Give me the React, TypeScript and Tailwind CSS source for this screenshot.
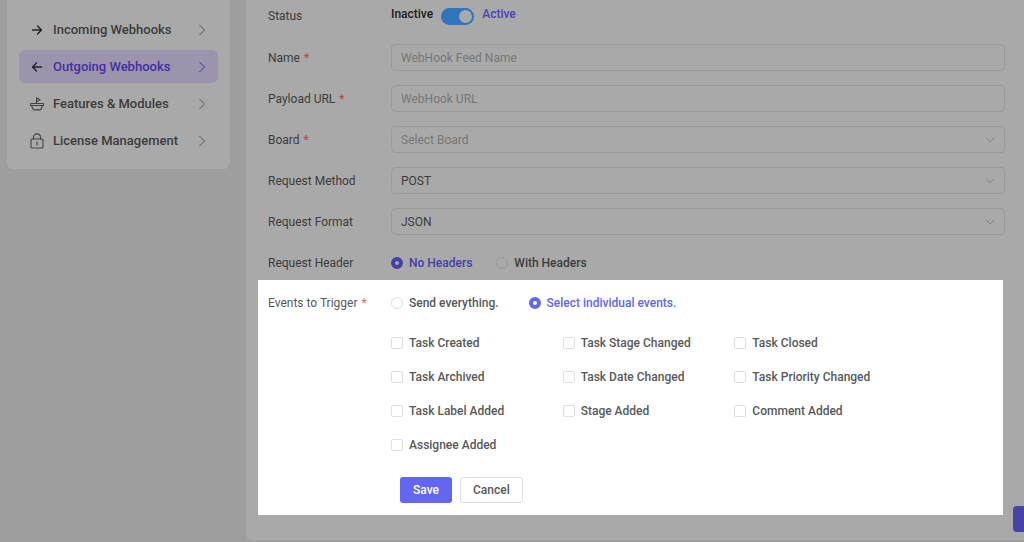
import React, { useState } from 'react';

interface NavItem {
  label: string;
  icon: React.ReactNode;
}

const ArrowIcon: React.FC<{ left?: boolean }> = ({ left }) => (
  <svg viewBox="0 0 14 14" className="h-[14px] w-[14px]" fill="none" stroke="#222" strokeWidth="1.4" strokeLinecap="round" strokeLinejoin="round">
    {left ? <path d="M11.5 7H2.5M6.5 3L2.5 7l4 4" /> : <path d="M2.5 7h9M7.5 3l4 4-4 4" />}
  </svg>
);

const BoatIcon = () => (
  <svg viewBox="0 0 14 14" className="h-[14px] w-[14px]" fill="none" stroke="#444" strokeWidth="1.1" strokeLinejoin="round" strokeLinecap="round">
    <path d="M6.5 6.5V.8l3.6 2-3.6 2" />
    <path d="M.6 6.5h12.8v2H.6z" />
    <path d="M1.7 8.5c.2 2.4.9 3.7 2.3 4.4h6c1.4-.7 2.1-2 2.3-4.4" />
  </svg>
);

const LockIcon = () => (
  <svg viewBox="0 0 14 16" className="h-4 w-[14px]" fill="none" stroke="#444" strokeWidth="1.1" strokeLinecap="round">
    <rect x="1" y="6" width="12" height="9" rx="1" />
    <path d="M3.5 6V4.4a3.5 3.5 0 0 1 7 0V6M7 9v3" />
  </svg>
);

const navItems: NavItem[] = [
  { label: 'Incoming Webhooks', icon: <ArrowIcon /> },
  { label: 'Outgoing Webhooks', icon: <ArrowIcon left /> },
  { label: 'Features & Modules', icon: <BoatIcon /> },
  { label: 'License Management', icon: <LockIcon /> },
];

const events = [
  'Task Created',
  'Task Stage Changed',
  'Task Closed',
  'Task Archived',
  'Task Date Changed',
  'Task Priority Changed',
  'Task Label Added',
  'Stage Added',
  'Comment Added',
  'Assignee Added',
];

const labelClass = 'w-[123px] shrink-0 text-[#3c3c3c]';
const fieldClass =
  'h-[27px] w-full appearance-none rounded border border-[#9a9a9a] bg-transparent px-[9px] outline-none placeholder:text-[#777]';

const Required = () => <span className="ml-1 text-[#b04444]">*</span>;

const TextRow: React.FC<{ id: string; label: string; placeholder: string }> = ({ id, label, placeholder }) => (
  <div className="flex h-[41px] items-center">
    <label htmlFor={id} className={labelClass}>
      {label}
      <Required />
    </label>
    <input id={id} type="text" placeholder={placeholder} className={fieldClass} />
  </div>
);

interface SelectRowProps {
  id: string;
  label: string;
  options: string[];
  required?: boolean;
}

const SelectRow: React.FC<SelectRowProps> = ({ id, label, options, required }) => (
  <div className="flex h-[41px] items-center">
    <label htmlFor={id} className={labelClass}>
      {label}
      {required && <Required />}
    </label>
    <div className="relative flex-1">
      <select id={id} className={`${fieldClass} ${required ? 'text-[#777]' : 'text-[#3c3c3c]'}`}>
        {options.map((o) => (
          <option key={o}>{o}</option>
        ))}
      </select>
      <svg viewBox="0 0 10 6" className="pointer-events-none absolute top-[11px] right-[10px] h-[6px] w-[10px]" fill="none" stroke="#808080" strokeWidth="1">
        <path d="M1 .8l4 4 4-4" />
      </svg>
    </div>
  </div>
);

const App: React.FC = () => {
  const [active, setActive] = useState(true);
  const [headers, setHeaders] = useState('none');
  const [trigger, setTrigger] = useState('individual');

  return (
    <div className="flex min-h-screen items-start overflow-hidden bg-[#9e9e9e] font-['Roboto',sans-serif] text-[12px] leading-4">
      <aside className="mr-4 ml-[7px] w-[223px] shrink-0 rounded-b-md bg-[#a9a9a9] px-3 pt-[13px] pb-3">
        <nav className="flex flex-col gap-1">
          {navItems.map((item) => {
            const current = item.label === 'Outgoing Webhooks';
            return (
              <a
                key={item.label}
                href="#"
                className={`flex h-[33px] items-center rounded-md pr-3 pl-[11px] text-[13px] font-medium ${
                  current ? 'bg-[#9c93ad] text-[#4330a3]' : 'text-[#3c3c3c]'
                }`}
              >
                {item.icon}
                <span className="ml-[9px] flex-1">{item.label}</span>
                <svg viewBox="0 0 8 12" className="h-3 w-2" fill="none" stroke={current ? '#4330a3' : '#555'} strokeWidth="1">
                  <path d="M1.5 1l5 5-5 5" />
                </svg>
              </a>
            );
          })}
        </nav>
      </aside>

      <main className="relative min-w-0 flex-1 rounded-bl-md bg-[#a9a9a9] pb-[25px]">
        <form onSubmit={(e) => e.preventDefault()}>
          <div className="pr-[19px] pl-[22px]">
            <div className="flex h-[37px] items-start pt-[6px]">
              <span className={`${labelClass} pt-[2px]`}>Status</span>
              <label htmlFor="status" className="font-medium text-[#1c1c1c]">Inactive</label>
              <input
                id="status"
                type="checkbox"
                role="switch"
                checked={active}
                onChange={(e) => setActive(e.target.checked)}
                className="mx-2 mt-[2px] flex h-[17px] w-[33px] appearance-none rounded-full bg-[#777] p-[2px] before:h-[13px] before:w-[13px] before:rounded-full before:bg-[#a9a9a9] checked:justify-end checked:bg-[#2f74bd]"
              />
              <label htmlFor="status" className="font-medium text-[#4a43b5]">Active</label>
            </div>
            <TextRow id="name" label="Name" placeholder="WebHook Feed Name" />
            <TextRow id="url" label="Payload URL" placeholder="WebHook URL" />
            <SelectRow id="board" label="Board" options={['Select Board']} required />
            <SelectRow id="method" label="Request Method" options={['POST', 'GET']} />
            <SelectRow id="format" label="Request Format" options={['JSON', 'XML']} />
            <div className="flex h-[38px] items-center pt-[3px] font-medium">
              <span className={`${labelClass} font-normal`}>Request Header</span>
              {[
                { value: 'none', label: 'No Headers' },
                { value: 'with', label: 'With Headers' },
              ].map((o) => (
                <label key={o.value} className="mr-6 flex items-center gap-[6px] text-[#3c3c3c] has-checked:text-[#4340a8]">
                  <input
                    type="radio"
                    name="headers"
                    checked={headers === o.value}
                    onChange={() => setHeaders(o.value)}
                    className="h-3 w-3 appearance-none rounded-full border border-[#999] checked:border-4 checked:border-[#4340a8]"
                  />
                  {o.label}
                </label>
              ))}
            </div>
          </div>

          <section className="mr-[21px] ml-3 bg-white pr-3 pb-3 pl-[10px] font-medium text-[#595959]">
            <div className="flex h-[46px] items-center">
              <span className="w-[123px] shrink-0 font-normal">
                Events to Trigger<span className="ml-1 text-[#f56565]">*</span>
              </span>
              {[
                { value: 'all', label: 'Send everything.' },
                { value: 'individual', label: 'Select individual events.' },
              ].map((o) => (
                <label key={o.value} className="mr-[30px] flex items-center gap-[6px] has-checked:text-[#6366e8]">
                  <input
                    type="radio"
                    name="trigger"
                    checked={trigger === o.value}
                    onChange={() => setTrigger(o.value)}
                    className="h-3 w-3 appearance-none rounded-full border border-[#e0e0e0] checked:border-4 checked:border-[#6366e8]"
                  />
                  {o.label}
                </label>
              ))}
            </div>
            <div className="ml-[123px] grid max-w-[515px] grid-cols-3">
              {events.map((name) => (
                <label key={name} className="flex h-[34px] items-center gap-[6px] whitespace-nowrap">
                  <input type="checkbox" className="h-3 w-3 appearance-none rounded-[2px] border border-[#e0e0e0] checked:bg-[#6366f1]" />
                  {name}
                </label>
              ))}
            </div>
            <div className="ml-[132px] flex gap-2 pt-[15px]">
              <button type="submit" className="h-[26px] rounded-[3px] bg-[#6366f1] px-[13px] text-white">Save</button>
              <button type="button" className="h-[26px] rounded-[3px] border border-[#e0e0e0] bg-white px-3">Cancel</button>
            </div>
          </section>
        </form>
        <button type="button" aria-label="Help" className="absolute right-0 bottom-2 h-[26px] w-[11px] rounded-l bg-[#4543a6]" />
      </main>
    </div>
  );
};

export default App;
